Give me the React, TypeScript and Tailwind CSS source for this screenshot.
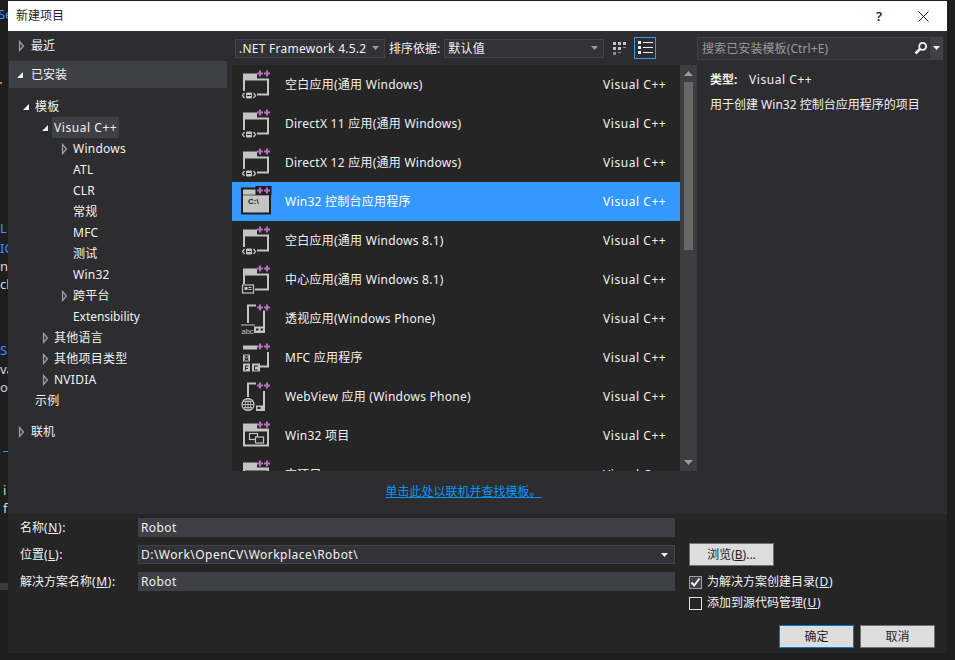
import React from 'react';

const FONT = 'font-["Noto_Sans","Noto_Sans_CJK_SC",sans-serif]';

type TreeRow = { label: string; indent: string; arrow?: 'open' | 'closed'; selected?: boolean; track?: string };

const treeRows: TreeRow[] = [
  { label: '模板', indent: 'pl-[14px]', arrow: 'open' },
  { label: 'Visual C++', indent: 'pl-[33px]', arrow: 'open', selected: true, track: 'tracking-[0.55px]' },
  { label: 'Windows', indent: 'pl-[53px]', arrow: 'closed' },
  { label: 'ATL', indent: 'pl-[65px]' },
  { label: 'CLR', indent: 'pl-[65px]' },
  { label: '常规', indent: 'pl-[65px]' },
  { label: 'MFC', indent: 'pl-[65px]' },
  { label: '测试', indent: 'pl-[65px]' },
  { label: 'Win32', indent: 'pl-[65px]' },
  { label: '跨平台', indent: 'pl-[53px]', arrow: 'closed' },
  { label: 'Extensibility', indent: 'pl-[65px]', track: 'tracking-[-0.05px]' },
  { label: '其他语言', indent: 'pl-[34px]', arrow: 'closed' },
  { label: '其他项目类型', indent: 'pl-[34px]', arrow: 'closed' },
  { label: 'NVIDIA', indent: 'pl-[34px]', arrow: 'closed' },
  { label: '示例', indent: 'pl-[27px]' },
];

type IconKind = 'blank' | 'console' | 'hub' | 'pivot' | 'mfc' | 'web' | 'win32';

const templates: { name: string; icon: IconKind; selected?: boolean }[] = [
  { name: '空白应用(通用 Windows)', icon: 'blank' },
  { name: 'DirectX 11 应用(通用 Windows)', icon: 'blank' },
  { name: 'DirectX 12 应用(通用 Windows)', icon: 'blank' },
  { name: 'Win32 控制台应用程序', icon: 'console', selected: true },
  { name: '空白应用(通用 Windows 8.1)', icon: 'blank' },
  { name: '中心应用(通用 Windows 8.1)', icon: 'hub' },
  { name: '透视应用(Windows Phone)', icon: 'pivot' },
  { name: 'MFC 应用程序', icon: 'mfc' },
  { name: 'WebView 应用 (Windows Phone)', icon: 'web' },
  { name: 'Win32 项目', icon: 'win32' },
  { name: '空项目', icon: 'win32' },
];

// bits of the editor behind the dialog that peek out on the left
const behind = [
  { text: 'Se', cls: 'top-[8px] -left-[2px] text-[#3794ff]' },
  { text: 'L', cls: 'top-[222px] left-0 text-[#3794ff]' },
  { text: 'IC', cls: 'top-[242px] left-0 text-[#3794ff]' },
  { text: 'n', cls: 'top-[260px] left-0 text-[#d4d4d4]' },
  { text: 'cl', cls: 'top-[278px] left-0 text-[#d4d4d4]' },
  { text: 'S', cls: 'top-[344px] left-0 text-[#3794ff]' },
  { text: 'va', cls: 'top-[363px] left-0 text-[#d4d4d4]' },
  { text: 'oc', cls: 'top-[381px] left-0 text-[#d4d4d4]' },
  { text: 'i', cls: 'top-[484px] left-[3px] text-[#d4d4d4]' },
  { text: 'f', cls: 'top-[502px] left-[3px] text-[#d4d4d4]' },
];

function Arrow({ kind }: { kind: 'open' | 'closed' }) {
  if (kind === 'open') {
    return (
      <svg width="8" height="8" viewBox="0 0 8 8" className="shrink-0">
        <path d="M7 1V7H1Z" fill="#f1f1f1" />
      </svg>
    );
  }
  return (
    <svg width="7" height="12" viewBox="0 0 7 12" className="shrink-0">
      <path d="M1.500 1.500L5.500 6L1.500 10.500Z" fill="#3a3a3d" stroke="#a0a0a0" strokeWidth="1.200" />
    </svg>
  );
}

function Plus({ outline }: { outline?: boolean }) {
  return (
    <>
      {outline && <rect x="14.500" y="0" width="16" height="9" fill="#1e1e1e" />}
      <path d="M18 1.500h2v2h2v2h-2v2h-2v-2h-2v-2h2zM25 1.500h2v2h2v2h-2v2h-2v-2h-2v-2h2z" fill="#b96fb9" />
    </>
  );
}

function Folder({ c }: { c: string }) {
  return <path d="M2 4.500h14v5h12v17H14v-2h12v-13H4v11H2z" fill={c} />;
}

function TemplateIcon({ kind }: { kind: IconKind }) {
  const c = '#c4c4c4';
  const bg = '#252526';
  return (
    <svg width="32" height="32" viewBox="0 0 32 32" className="shrink-0">
      {kind === 'blank' && (
        <>
          <Folder c={c} />
          <rect x="0" y="22" width="16" height="9" fill={bg} />
          <path d="M3.500 24L1.500 26.500L3.500 29M12.500 24L14.500 26.500L12.500 29" fill="none" stroke={c} strokeWidth="1.300" />
          <rect x="5" y="23.500" width="6" height="6" rx="1" fill={c} />
          <rect x="6" y="26" width="4" height="1" fill={bg} />
          <Plus />
        </>
      )}
      {kind === 'console' && (
        <>
          <rect x="0" y="1.500" width="30" height="27" fill="#1e1e1e" />
          <rect x="2" y="3.500" width="26" height="23" fill="#c4c4c4" />
          <rect x="2" y="8.500" width="26" height="1" fill="#555555" />
          <text x="7" y="18" fontSize="8" fontWeight="700" fill="#1e1e1e" fontFamily="Liberation Sans, sans-serif">C:\</text>
          <Plus outline />
        </>
      )}
      {kind === 'hub' && (
        <>
          <Folder c={c} />
          <rect x="0" y="20" width="14" height="11" fill={bg} />
          <rect x="1.500" y="21" width="11" height="8" fill="none" stroke={c} strokeWidth="1.200" />
          <path d="M3.500 23h3v3h-3zM7.500 23h3v1h-3zM7.500 25h3v1h-3z" fill={c} />
          <Plus />
        </>
      )}
      {kind === 'pivot' && (
        <>
          <path d="M6 1.500h9v2H8V20H6zM22 7.500h2V24h-2z" fill={c} />
          <rect x="0" y="21.500" width="14" height="1" fill={c} />
          <rect x="13" y="23.500" width="11" height="6.500" fill={c} />
          <rect x="15" y="25.500" width="2.500" height="2" fill={bg} />
          <rect x="19.500" y="25.500" width="2.500" height="2" fill={bg} />
          <text x="0.500" y="30.500" fontSize="7.500" fill={c} fontFamily="Liberation Sans, sans-serif">abc</text>
          <Plus />
        </>
      )}
      {kind === 'mfc' && (
        <>
          <path d="M2 3.500h14v4H2zM26 10h2v15.500h-9v-2h7z" fill={c} />
          <rect x="2.500" y="13" width="6" height="6" fill="none" stroke={c} />
          <path d="M3.500 18v-4l2 2.500 2-2.500v4" fill="none" stroke={c} strokeWidth="0.800" />
          <rect x="2" y="21.500" width="7" height="8" fill={c} />
          <rect x="11" y="21.500" width="8" height="8" fill={c} />
          <path d="M4 23.500h3.500v1H5v1.500h2v1H5v1.500H4z" fill={bg} />
          <path d="M13 23.500h4v1h-3v3h3v1h-4z" fill={bg} />
          <Plus />
        </>
      )}
      {kind === 'web' && (
        <>
          <path d="M6 1.500h9v2H8V16H6zM22 10h2v20h-9v-5.500h7z" fill={c} />
          <rect x="16.500" y="26" width="3" height="2" fill={bg} />
          <circle cx="7" cy="23.500" r="6" fill={bg} stroke={c} strokeWidth="1.200" />
          <path d="M1 23.500h12M7 17.500v12M2.500 20.500h9M2.500 26.500h9" stroke={c} strokeWidth="0.900" />
          <ellipse cx="7" cy="23.500" rx="2.800" ry="6" fill="none" stroke={c} strokeWidth="0.900" />
          <Plus />
        </>
      )}
      {kind === 'win32' && (
        <>
          <path d="M2 3.500h14v5h12v18H2z" fill={c} />
          <rect x="4" y="11.500" width="22" height="13" fill={bg} />
          <rect x="8.500" y="13.500" width="8" height="6" fill="none" stroke={c} strokeWidth="1.200" />
          <rect x="14.500" y="17" width="8" height="6" fill={bg} stroke={c} strokeWidth="1.200" />
          <Plus />
        </>
      )}
    </svg>
  );
}

function TemplateRow({ name, icon, selected }: { name: string; icon: IconKind; selected?: boolean }) {
  return (
    <div className={`flex items-center h-[39px] shrink-0 pl-[9px] ${selected ? 'bg-[#3399ff] text-white' : 'text-[#f1f1f1]'}`}>
      <TemplateIcon kind={icon} />
      <span className="ml-[12px] flex-1 tracking-[0.25px] whitespace-nowrap">{name}</span>
      <span className="w-[77px] tracking-[0.55px] whitespace-nowrap">Visual C++</span>
    </div>
  );
}

function Caret({ fill }: { fill: string }) {
  return (
    <svg width="7" height="4" viewBox="0 0 7 4" className="shrink-0">
      <path d="M0 0h7L3.500 4z" fill={fill} />
    </svg>
  );
}

function Combo({ label, width }: { label: string; width: string }) {
  return (
    <div className={`flex items-center h-[19px] ${width} bg-[#333337] border border-[#434346] pl-[3px] pr-[5px] justify-between`}>
      <span className="tracking-[0.25px] whitespace-nowrap pt-px">{label}</span>
      <Caret fill="#999999" />
    </div>
  );
}

function Field({ value, combo }: { value: string; combo?: boolean }) {
  return (
    <div className={`flex items-center justify-between h-[19px] w-[537px] pr-[6px] ${combo ? 'pl-[2px] tracking-[0.47px] bg-[#333337] border border-[#434346]' : 'pl-[3px] tracking-[0.4px] bg-[#3f3f46]'}`}>
      <span>{value}</span>
      {combo && <Caret fill="#f1f1f1" />}
    </div>
  );
}

function Label({ text, hot }: { text: string; hot: string }) {
  return (
    <span className="w-[118px] shrink-0 whitespace-nowrap">
      {text}<span className="tracking-[0.6px]">(<span className="underline">{hot}</span>):</span>
    </span>
  );
}

function Check({ checked, label, hot }: { checked?: boolean; label: string; hot: string }) {
  return (
    <div className="flex items-center gap-[5px] h-[14px]">
      <span className={`w-[13px] h-[13px] flex items-center justify-center border ${checked ? 'border-[#a0a0a0] bg-[#3f3f46]' : 'border-[#e0e0e0]'}`}>
        {checked && (
          <svg width="11" height="11" viewBox="0 0 11 11"><path d="M1.500 5.500L4.200 8.500L9.500 1.500" fill="none" stroke="#f1f1f1" strokeWidth="2" /></svg>
        )}
      </span>
      <span className="whitespace-nowrap">{label}<span className="tracking-[0.8px]">(<span className="underline">{hot}</span>)</span></span>
    </div>
  );
}

function DialogButton({ label, primary }: { label: string; primary?: boolean }) {
  return (
    <button className={`w-[75px] h-[23px] bg-[#dddddd] text-[#1e1e1e] border ${primary ? 'border-[#007acc]' : 'border-[#707070]'}`}>{label}</button>
  );
}

export default function App() {
  return (
    <div className={`${FONT} relative text-[12px] leading-none w-[955px] h-[660px] overflow-hidden bg-[#1e1e1e] pl-[8px] pt-px antialiased`}>
      {behind.map(b => (
        <span key={b.text} className={`absolute text-[13px] ${b.cls}`}>{b.text}</span>
      ))}
      <div className="absolute left-0 top-[82px] w-[2px] h-[2px] bg-[#ce7b2b]" />
      <div className="absolute left-[3px] top-[451px] w-[5px] h-px bg-[#3794ff]" />
      <div className="absolute left-0 top-[583px] w-[8px] h-[7px] bg-[#3a3a3d]" />
      <div className="relative w-[939px] h-[652px] flex flex-col bg-[#2d2d30] text-[#f1f1f1]">
        {/* title bar */}
        <div className="h-[30px] shrink-0 bg-white text-[#1e1e1e] flex items-center justify-between pl-[8px] pr-[18px]">
          <span className="text-[12px]">新建项目</span>
          <div className="flex items-center gap-[36px]">
            <span className="text-[13px] font-semibold">?</span>
            <svg width="11" height="11" viewBox="0 0 11 11"><path d="M0.500 0.500L10.500 10.500M10.500 0.500L0.500 10.500" stroke="#1e1e1e" strokeWidth="1" /></svg>
          </div>
        </div>

        <div className="flex h-[483px] shrink-0">
          {/* left tree */}
          <div className="w-[224px] shrink-0 pt-px">
            <div className="h-[27px] flex items-center pl-[10px] gap-[6px]"><Arrow kind="closed" /><span>最近</span></div>
            <div className="h-[27px] mt-[2px] ml-px mr-[5px] bg-[#3f3f46] flex items-center pl-[7px] gap-[7px]"><Arrow kind="open" /><span>已安装</span></div>
            <div className="mt-[8px]">
              {treeRows.map(r => (
                <div key={r.label} className={`h-[21px] flex items-center gap-[5px] ${r.indent}`}>
                  {r.arrow && <Arrow kind={r.arrow} />}
                  <span className={`whitespace-nowrap ${r.track ?? 'tracking-[0.25px]'} ${r.selected ? 'bg-[#3f3f46] h-[21px] flex items-center px-[2px] -ml-[2px]' : ''}`}>{r.label}</span>
                </div>
              ))}
            </div>
            <div className="h-[27px] mt-[7px] flex items-center pl-[10px] gap-[6px]"><Arrow kind="closed" /><span>联机</span></div>
          </div>

          {/* centre */}
          <div className="w-[465px] shrink-0 flex flex-col">
            <div className="h-[34px] shrink-0 flex items-center pl-[3px] gap-[4px]">
              <Combo label=".NET Framework 4.5.2" width="w-[150px]" />
              <span className="whitespace-nowrap pt-px">排序依据:</span>
              <Combo label="默认值" width="w-[160px]" />
              <div className="ml-px w-[21px] h-[22px] flex items-center justify-center">
                <svg width="15" height="15" viewBox="0 0 15 15">
                  <path d="M1 1h3v3H1zM6 1h3v3H6zM11 1h3v3h-3zM1 6h3v3H1zM6 6h3v3H6z" fill="#c4c4c4" />
                  <path d="M11 6h3v1h-3zM1 11h3v3H1zM6 11h3v1H6z" fill="#8a8a8a" />
                </svg>
              </div>
              <div className="w-[22px] h-[22px] border border-[#3399ff] flex items-center justify-center">
                <svg width="15" height="14" viewBox="0 0 15 14">
                  <path d="M0 0h3v3H0zM0 5h3v3H0zM0 10h3v3H0zM5 1h10v1H5zM5 6h10v1H5zM5 11h10v1H5z" fill="#f1f1f1" />
                </svg>
              </div>
            </div>
            <div className="flex h-[406px] shrink-0">
              <div className="w-[448px] bg-[#252526] overflow-hidden flex flex-col">
                {templates.map(t => <TemplateRow key={t.name} {...t} />)}
              </div>
              <div className="w-[17px] bg-[#3e3e42] flex flex-col items-center">
                <svg width="9" height="5" viewBox="0 0 9 5" className="mt-[6px]"><path d="M4.500 0L9 5H0z" fill="#999999" /></svg>
                <div className="mt-[6px] w-[9px] h-[168px] bg-[#686868]" />
                <svg width="9" height="5" viewBox="0 0 9 5" className="mt-auto mb-[6px]"><path d="M0 0h9L4.500 5z" fill="#999999" /></svg>
              </div>
            </div>
            <div className="flex-1 flex items-center justify-center pr-[2px] pb-[2px]">
              <span className="text-[#0097fb] underline">单击此处以联机并查找模板。</span>
            </div>
          </div>

          {/* right details */}
          <div className="flex-1 min-w-0 flex flex-col">
            <div className="h-[34px] shrink-0 flex items-center">
              <div className="w-[246px] h-[23px] bg-[#333337] border border-[#434346] flex items-stretch pl-[4px] text-[#999999] justify-between">
                <span className="tracking-[0.1px] self-center pt-px">搜索已安装模板(Ctrl+E)</span>
                <div className="flex items-center">
                  <svg width="14" height="14" viewBox="0 0 14 14" className="mr-[2px]"><circle cx="8.700" cy="5.300" r="3.500" fill="none" stroke="#f1f1f1" strokeWidth="1.800" /><path d="M6 8L1.500 12.500" stroke="#f1f1f1" strokeWidth="2.500" /></svg>
                  <div className="w-[12px] h-full bg-[#3f3f46] flex items-center justify-center"><Caret fill="#f1f1f1" /></div>
                </div>
              </div>
            </div>
            <div className="pl-[13px] pt-[9px]">
              <div className="flex"><span className="font-bold w-[39px]">类型:</span><span className="tracking-[0.55px]">Visual C++</span></div>
              <p className="mt-[13px] whitespace-nowrap">用于创建 Win32 控制台应用程序的项目</p>
            </div>
          </div>
        </div>

        {/* bottom form */}
        <div className="flex-1 bg-[#252526] flex pl-[12px] pt-[4px]">
          <div className="flex flex-col gap-[8px]">
            <div className="flex items-center"><Label text="名称" hot="N" /><Field value="Robot" /></div>
            <div className="flex items-center"><Label text="位置" hot="L" /><Field value="D:\Work\OpenCV\Workplace\Robot\" combo /></div>
            <div className="flex items-center"><Label text="解决方案名称" hot="M" /><Field value="Robot" /></div>
          </div>
          <div className="ml-[14px] flex flex-col">
            <button className="mt-[25px] w-[85px] h-[23px] bg-[#dddddd] text-[#1e1e1e] border border-[#707070]">浏览(<span className="underline">B</span>)...</button>
            <div className="mt-[9px] flex flex-col gap-[7px]">
              <Check checked label="为解决方案创建目录" hot="D" />
              <Check label="添加到源代码管理" hot="U" />
            </div>
            <div className="mt-[15px] ml-[90px] flex gap-[6px]">
              <DialogButton label="确定" primary />
              <DialogButton label="取消" />
            </div>
          </div>
        </div>
      </div>
    </div>
  );
}
